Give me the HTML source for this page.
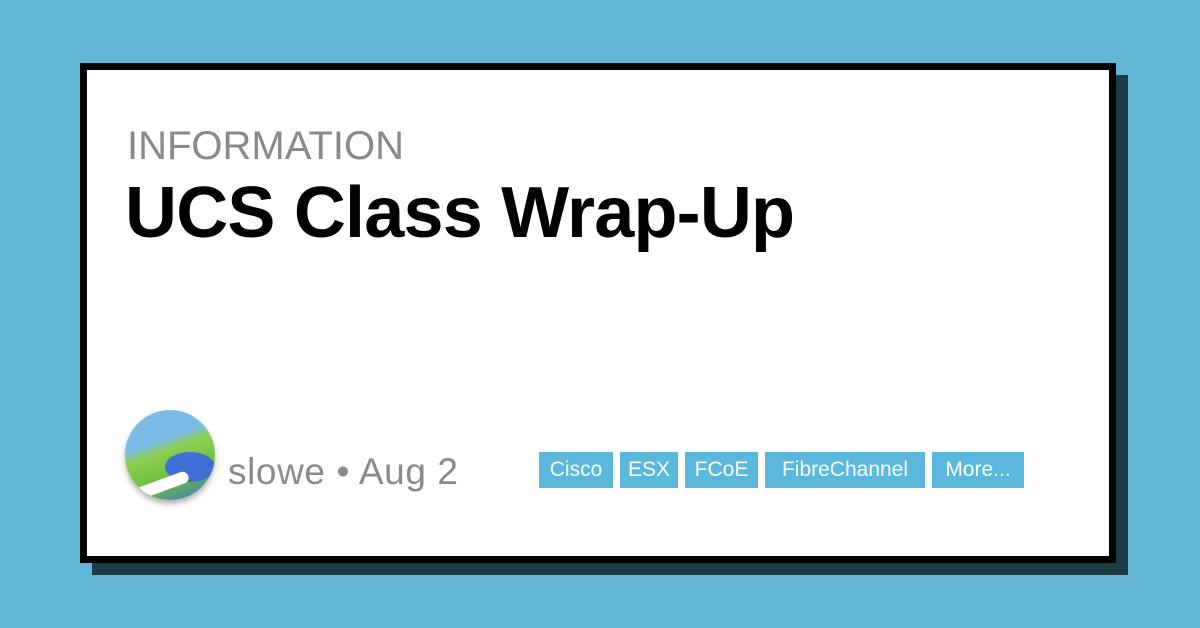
<!DOCTYPE html>
<html><head><style>
body{margin:0;width:1200px;height:628px;background:#63b5d6;position:relative;overflow:hidden;font-family:"Liberation Sans",sans-serif}
.sh{position:absolute;left:92px;top:75px;width:1036px;height:500px;background:#1e3c46}
.card{position:absolute;left:80px;top:63px;width:1022px;height:486px;background:#fff;border:7px solid #000}
.cat{position:absolute;left:40px;top:56px;font-size:40px;line-height:40px;color:#8a8a8a}
.title{position:absolute;left:38px;top:107px;font-size:72px;line-height:72px;font-weight:bold;color:#000;letter-spacing:-0.8px}
.av{position:absolute;left:38px;top:340px;width:90px;height:90px;border-radius:50%;overflow:hidden;box-shadow:0 4px 6px rgba(0,0,0,.3);background:linear-gradient(160deg,#7bbbe6 0%,#7bbbe6 35%,#8ccf55 45%,#6cbf3a 70%,#3d6fd6 100%)}
.meta{position:absolute;left:141px;top:383px;font-size:37px;line-height:37px;color:#8a8a8a;letter-spacing:0.6px}
.tags{position:absolute;left:452px;top:382px;display:flex;gap:7px}
.tags span{background:#5ab8dc;color:#fff;font-size:21px;height:36px;line-height:36px;text-align:center}
</style></head><body>
<div class="sh"></div>
<div class="card">
<div class="cat">INFORMATION</div>
<div class="title">UCS Class Wrap-Up</div>
<div class="av"><div style="position:absolute;left:40px;top:42px;width:50px;height:30px;border-radius:50%;background:#3d6fd6"></div><div style="position:absolute;left:5px;top:70px;width:60px;height:12px;background:#fff;border-radius:6px;transform:rotate(-20deg)"></div></div>
<div class="meta">slowe • Aug 2</div>
<div class="tags"><span style="width:74px">Cisco</span><span style="width:58px">ESX</span><span style="width:73px">FCoE</span><span style="width:160px">FibreChannel</span><span style="width:92px">More...</span></div>
</div>
</body></html>
